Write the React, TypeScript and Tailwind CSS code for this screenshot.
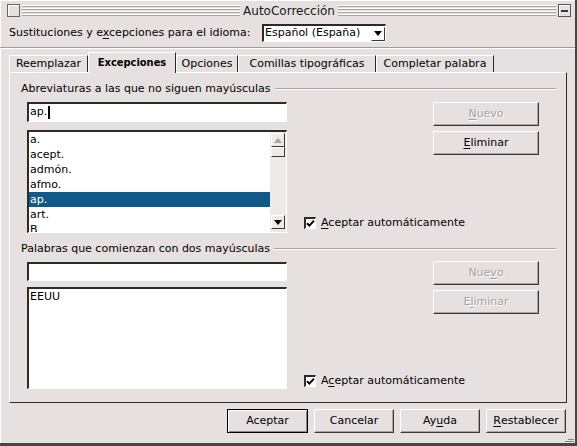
import React from "react";

function U({ children }: { children: React.ReactNode }) {
  return <span className="underline decoration-1 underline-offset-[2px]">{children}</span>;
}

function Btn({
  children,
  disabled = false,
  def = false,
  className = "",
}: {
  children: React.ReactNode;
  disabled?: boolean;
  def?: boolean;
  className?: string;
}) {
  const bevel = def
    ? "border border-black shadow-[inset_1px_1px_0_#ffffff,inset_-1px_-1px_0_#8c8686]"
    : "border border-white border-r-[#3c3838] border-b-[#3c3838] shadow-[inset_-1px_-1px_0_#aaa4a4]";
  const text = disabled ? "text-[#a6a0a0] [text-shadow:1px_1px_0_#ffffff]" : "text-black";
  return (
    <div className={`h-[24px] flex items-center justify-center whitespace-nowrap ${bevel} ${text} ${className}`}>
      {children}
    </div>
  );
}

const SUNKEN =
  "bg-white border-t-2 border-l-2 border-r border-b border-t-[#2e2a2a] border-l-[#2e2a2a] border-r-white border-b-white";

function Stripes() {
  return (
    <div className="flex-1 flex flex-col gap-[1px]">
      {[0, 1, 2, 3].map((i) => (
        <div key={i} className="h-[2px] border-t border-t-white border-b border-b-[#aaa4a4]" />
      ))}
    </div>
  );
}

function CheckBox({ children }: { children: React.ReactNode }) {
  return (
    <div className="flex items-center gap-[5px] whitespace-nowrap">
      <div className={`w-[12px] h-[12px] ${SUNKEN} flex items-center justify-center`}>
        <svg width="9" height="9" viewBox="0 0 9 9">
          <path d="M1 4.2 L3.4 6.6 L8 1.6" stroke="#000" strokeWidth="2" fill="none" />
        </svg>
      </div>
      <span>{children}</span>
    </div>
  );
}

function GroupLabel({ children }: { children: React.ReactNode }) {
  return (
    <div className="h-[16px] flex items-center gap-[4px]">
      <span className="whitespace-nowrap">{children}</span>
      <div className="flex-1 h-[2px] border-t border-t-[#a8a2a2] border-b border-b-white" />
    </div>
  );
}

function Tri({ up, color }: { up?: boolean; color: string }) {
  return (
    <svg width="8" height="5" viewBox="0 0 8 5">
      {up ? <path d="M0 5 L4 0 L8 5 Z" fill={color} /> : <path d="M0 0 L8 0 L4 5 Z" fill={color} />}
    </svg>
  );
}

function ListBox({
  items,
  selected,
  height,
  scroll,
}: {
  items: string[];
  selected?: number;
  height: string;
  scroll?: boolean;
}) {
  return (
    <div className={`${SUNKEN} ${height} flex overflow-hidden`}>
      <div className="flex-1 flex flex-col overflow-hidden">
        {items.map((it, i) => (
          <div
            key={i}
            className={`h-[15px] shrink-0 leading-[15px] pl-[1px] pr-[1px] ${
              i === selected ? "bg-[#0f5a88] text-white" : "text-black"
            }`}
          >
            {it}
          </div>
        ))}
      </div>
      {scroll && (
        <div className="w-[16px] shrink-0 bg-[#eeeaea] flex flex-col p-[1px] pb-[3px]">
          <div className="h-[14px] border border-white border-r-[#3c3838] border-b-[#3c3838] flex items-center justify-center">
            <Tri up color="#a8a2a2" />
          </div>
          <div className="h-[10px] border border-white border-r-[#3c3838] border-b-[#3c3838]" />
          <div className="flex-1" />
          <div className="h-[14px] border border-white border-r-[#3c3838] border-b-[#3c3838] flex items-center justify-center">
            <Tri color="#000" />
          </div>
        </div>
      )}
    </div>
  );
}

const tabs = [
  { label: "Reemplazar", w: "w-[79px]" },
  { label: "Excepciones", w: "w-[88px]", active: true },
  { label: "Opciones", w: "w-[62px]" },
  { label: "Comillas tipográficas", w: "w-[138px]" },
  { label: "Completar palabra", w: "w-[118px]" },
];

export default function App() {
  return (
    <div className="relative w-[577px] h-[446px] overflow-hidden bg-[#e6e0e0] text-black text-[11px] font-['DejaVu_Sans',sans-serif] border-r-2 border-b-[3px] border-r-[#4a4646] border-b-[#4a4646] shadow-[inset_1px_1px_0_#ffffff] flex flex-col">
      {/* Title bar */}
      <div className="h-[21px] flex items-center pl-[7px] pr-[4px]">
        <div className="w-[13px] h-[13px] border border-[#6a6464] shadow-[inset_1px_1px_0_#ffffff]" />
        <div className="flex-1 flex items-center ml-[2px]">
          <Stripes />
          <span className="px-[3px] text-[12px] text-[#1a1818] whitespace-nowrap leading-none">AutoCorrección</span>
          <Stripes />
        </div>
        <div className="ml-[2px] w-[13px] h-[13px] border border-[#5a5454] shadow-[inset_1px_1px_0_#ffffff] flex items-center justify-center">
          <div className="w-[7px] h-[2px] bg-[#3c3838]" />
        </div>
      </div>

      {/* Language row */}
      <div className="mt-[2px] h-[20px] flex items-center pl-[9px]">
        <div className="w-[253px] whitespace-nowrap">
          Sustituciones y e<U>x</U>cepciones para el idioma:
        </div>
        <div className={`w-[124px] h-[18px] ${SUNKEN} flex items-center justify-between`}>
          <span className="pl-[1px] whitespace-nowrap">Español (España)</span>
          <div className="w-[14px] h-[14px] border border-white border-r-[#3c3838] border-b-[#3c3838] flex items-center justify-center">
            <Tri color="#000" />
          </div>
        </div>
      </div>

      {/* Separator */}
      <div className="mt-[4px] h-[2px] border-t border-t-[#a09a9a] border-b border-b-white" />

      {/* Tabs */}
      <div className="mt-[3px] ml-[9px] h-[20px] flex items-end">
        {tabs.map((t) =>
          t.active ? (
            <div
              key={t.label}
              className={`${t.w} h-[21px] -mb-px relative z-10 bg-[#e6e0e0] border-t border-l border-t-white border-l-white border-r border-r-[#2e2a2a] flex items-center justify-center font-bold font-['DejaVu_Sans_Condensed','DejaVu_Sans',sans-serif] whitespace-nowrap`}
            >
              {t.label}
            </div>
          ) : (
            <div
              key={t.label}
              className={`${t.w} h-[17px] border-t border-l border-t-white border-l-white border-r border-r-[#2e2a2a] flex items-center justify-center whitespace-nowrap`}
            >
              {t.label}
            </div>
          )
        )}
      </div>

      {/* Panel */}
      <div className="ml-[9px] w-[558px] h-[331px] border-t border-l border-t-white border-l-white border-r border-b border-r-[#2e2a2a] border-b-[#2e2a2a] pl-[11px] pr-[10px] flex flex-col">
        <div className="mt-[8px]">
          <GroupLabel>Abreviaturas a las que no siguen mayúsculas</GroupLabel>
        </div>
        <div className="mt-[5px] ml-[6px] flex">
          <div className="w-[260px] flex flex-col">
            <div className={`h-[20px] ${SUNKEN} flex items-center`}>
              <span className="pl-[1px]">ap.</span>
              <span className="w-[2px] h-[13px] bg-black ml-[1px]" />
            </div>
            <div className="mt-[8px]">
              <ListBox
                items={["a.", "acept.", "admón.", "afmo.", "ap.", "art.", "B"]}
                selected={4}
                height="h-[103px]"
                scroll
              />
            </div>
          </div>
          <div className="w-[146px] flex items-end pl-[17px] pb-[2px]">
            <CheckBox>
              <U>A</U>ceptar automáticamente
            </CheckBox>
          </div>
          <div className="w-[106px] flex flex-col gap-[5px]">
            <Btn disabled>
              <U>N</U>uevo
            </Btn>
            <Btn>
              <U>E</U>liminar
            </Btn>
          </div>
        </div>

        <div className="mt-[8px]">
          <GroupLabel>Palabras que comienzan con dos mayúsculas</GroupLabel>
        </div>
        <div className="mt-[5px] ml-[6px] flex">
          <div className="w-[260px] flex flex-col">
            <div className={`h-[19px] ${SUNKEN}`} />
            <div className="mt-[6px]">
              <ListBox items={["EEUU"]} height="h-[102px]" />
            </div>
          </div>
          <div className="w-[146px] flex items-end pl-[17px] pb-0">
            <CheckBox>
              A<U>c</U>eptar automáticamente
            </CheckBox>
          </div>
          <div className="w-[106px] -mt-px flex flex-col gap-[5px]">
            <Btn disabled>
              Nue<U>v</U>o
            </Btn>
            <Btn disabled>
              E<U>l</U>iminar
            </Btn>
          </div>
        </div>
      </div>

      {/* Bottom buttons */}
      <div className="mt-[6px] pr-[9px] flex justify-end gap-[6px]">
        <Btn def className="w-[81px]">
          Aceptar
        </Btn>
        <Btn className="w-[80px]">Cancelar</Btn>
        <Btn className="w-[80px]">
          Ay<U>u</U>da
        </Btn>
        <Btn className="w-[80px]">
          <U>R</U>establecer
        </Btn>
      </div>

      {/* Resize grip */}
      <div className="absolute right-[1px] bottom-[1px] flex flex-col gap-[1px] items-end">
        <div className="w-[6px] h-px bg-[#8a8484]" />
        <div className="w-[9px] h-px bg-[#8a8484]" />
      </div>
    </div>
  );
}
